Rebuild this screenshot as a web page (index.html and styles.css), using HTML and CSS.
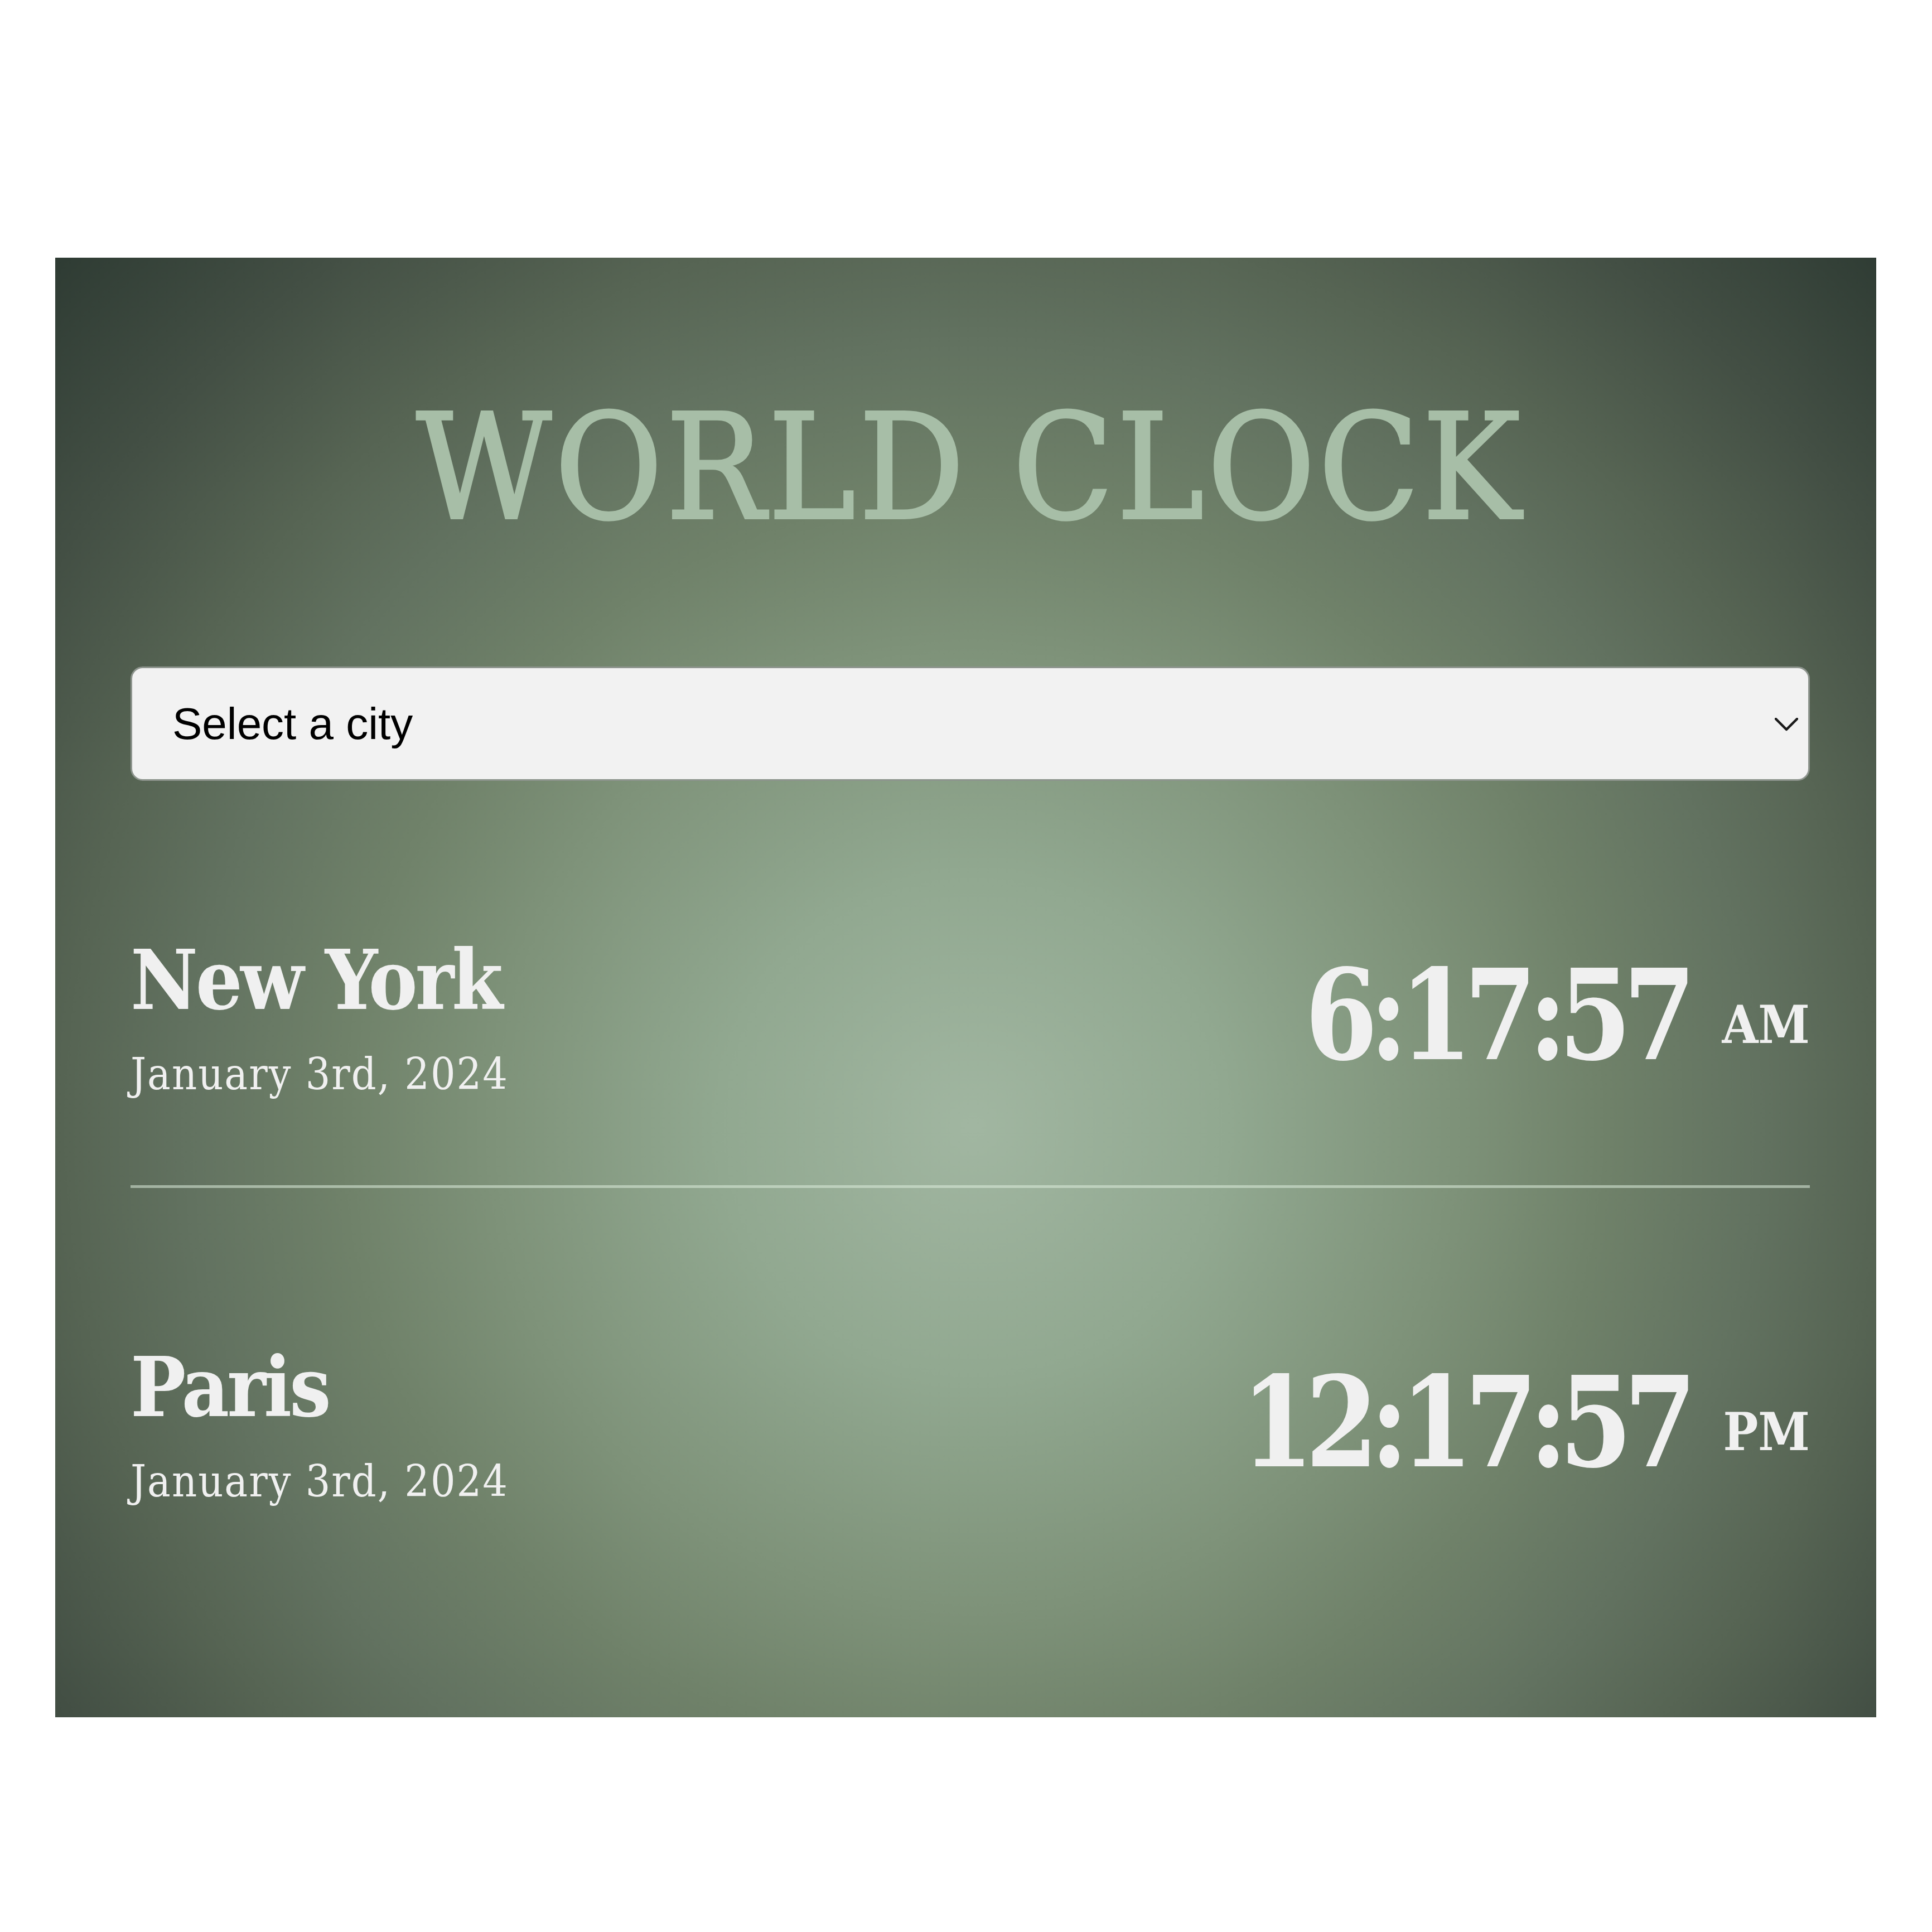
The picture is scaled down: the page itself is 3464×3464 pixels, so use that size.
FILE: index.html
```html
<!DOCTYPE html>
<html lang="en">
<head>
<meta charset="utf-8">
<title>World Clock</title>
<link rel="stylesheet" href="styles.css">
</head>
<body>
<main class="page">
  <section class="card">
    <h1 class="title">WORLD CLOCK</h1>
    <div class="picker">
      <select class="city-select">
        <option>Select a city</option>
        <option>New York</option>
        <option>Paris</option>
      </select>
      <svg class="chevron" viewBox="0 0 42 24" aria-hidden="true"><polyline points="2,2 21,21 40,2" fill="none" stroke="#1a1a1a" stroke-width="4.5" stroke-linecap="round" stroke-linejoin="round"/></svg>
    </div>
    <div class="cities">
      <div class="row">
        <div class="place">
          <h2 class="name">New York</h2>
          <div class="date">January 3rd, 2024</div>
        </div>
        <div class="time"><span class="digits">6:17:57</span><small class="ampm">AM</small></div>
      </div>
      <div class="row">
        <div class="place">
          <h2 class="name">Paris</h2>
          <div class="date">January 3rd, 2024</div>
        </div>
        <div class="time"><span class="digits">12:17:57</span><small class="ampm">PM</small></div>
      </div>
    </div>
  </section>
</main>
</body>
</html>
```
FILE: styles.css
```css
html, body {
  margin: 0;
  padding: 0;
  background: #ffffff;
}

.page {
  padding: 462px 0 0 99px;
}

.card {
  width: 3265px;
  box-sizing: border-box;
  padding: 246px 119px 224px 135px;
  background: radial-gradient(circle farthest-corner at 50.4% 59.6%,
    #a1b6a1 0%, #91a890 20%, #7e9279 38%, #6f8169 50%, #627260 62%,
    #566453 72%, #434f44 85%, #2e3b33 100%);
  font-family: "DejaVu Serif Condensed", "DejaVu Serif", serif;
  color: #f0f0f0;
}

.title {
  margin: 0;
  text-align: center;
  font-size: 262px;
  line-height: 1;
  font-weight: 400;
  letter-spacing: 6px;
  color: #a7bea7;
  -webkit-text-stroke: 4px #a7bea7;
}

.picker {
  position: relative;
  margin-top: 225px;
}

.city-select {
  display: block;
  width: 100%;
  height: 205px;
  box-sizing: border-box;
  -webkit-appearance: none;
  appearance: none;
  border: 3px solid #8d948d;
  border-radius: 22px;
  background: #f2f2f2;
  color: #000;
  font-family: "Liberation Sans", Arial, sans-serif;
  font-size: 80px;
  padding: 0 72px;
}

.chevron {
  position: absolute;
  right: 21px;
  top: 92px;
  width: 42px;
  height: 24px;
  pointer-events: none;
}

.row {
  display: flex;
  justify-content: space-between;
  align-items: center;
  padding: 270px 0 154px;
  border-bottom: 5px solid rgba(220, 236, 220, 0.55);
}

.row:last-child {
  border-bottom: none;
}

.place {
  display: flex;
  flex-direction: column;
}

.name {
  margin: 0;
  font-size: 147px;
  line-height: 176px;
  font-weight: 700;
  letter-spacing: -4px;
}

.date {
  margin-top: 36px;
  font-size: 78px;
  line-height: 89px;
  letter-spacing: 2px;
}

.time {
  font-size: 224px;
  line-height: 1;
  font-weight: 700;
  white-space: nowrap;
}

.digits {
  display: inline-block;
  letter-spacing: -16px;
  transform: scaleX(0.93);
  transform-origin: right center;
}

.ampm {
  font-size: 93px;
  line-height: 1;
  margin-left: 62px;
  vertical-align: 29px;
}
```
